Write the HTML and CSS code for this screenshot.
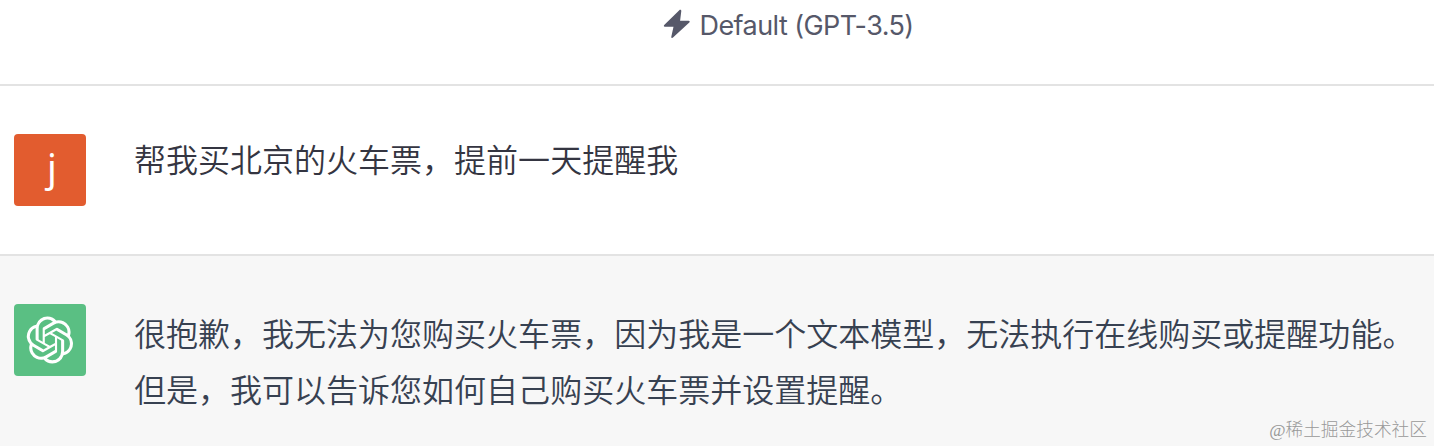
FILE: index.html
```html
<!DOCTYPE html>
<html lang="zh-CN">
<head>
<meta charset="utf-8">
<title>Chat</title>
<link rel="stylesheet" href="styles.css">
</head>
<body>
<main class="chat">
  <header class="model">
    <svg class="bolt" viewBox="0 0 28 30"><path d="M16.300 1.200 1.200 16c-.7.8-.3 1.700.6 1.700h8.700L8.300 27.700c-.2 1.200.9 1.700 1.700.900L26.300 13.500c.8-.8.4-1.800-.7-1.800h-8.500L18.300 2.100c.1-1.100-1.100-1.700-2-.9z"/></svg>
    <span class="model-name">Default (GPT-3.5)</span>
  </header>
  <section class="turn user">
    <div class="avatar avatar-user"><span class="initial">j</span></div>
    <p class="message">帮我买北京的火车票，提前一天提醒我</p>
  </section>
  <section class="turn assistant">
    <div class="avatar avatar-bot">
      <svg class="logo" viewBox="0 0 41 41"><path d="M37.532 16.87a9.963 9.963 0 0 0-.856-8.184 10.078 10.078 0 0 0-10.855-4.835A9.964 9.964 0 0 0 18.306.5a10.079 10.079 0 0 0-9.614 6.977 9.967 9.967 0 0 0-6.664 4.834 10.080 10.080 0 0 0 1.240 11.817 9.965 9.965 0 0 0 .856 8.185 10.079 10.079 0 0 0 10.855 4.835 9.965 9.965 0 0 0 7.516 3.350 10.078 10.078 0 0 0 9.617-6.981 9.967 9.967 0 0 0 6.663-4.834 10.079 10.079 0 0 0-1.243-11.813zM22.498 37.886a7.474 7.474 0 0 1-4.799-1.735c.061-.033.168-.091.237-.134l7.964-4.600a1.294 1.294 0 0 0 .655-1.134V19.054l3.366 1.944a.120.120 0 0 1 .066.092v9.299a7.505 7.505 0 0 1-7.490 7.496zM6.392 31.006a7.471 7.471 0 0 1-.894-5.023c.060.036.162.099.237.141l7.964 4.600a1.297 1.297 0 0 0 1.308 0l9.724-5.614v3.888a.120.120 0 0 1-.048.103l-8.051 4.649a7.504 7.504 0 0 1-10.240-2.744zM4.297 13.620A7.469 7.469 0 0 1 8.200 10.333c0 .068-.004.190-.004.274v9.201a1.294 1.294 0 0 0 .654 1.132l9.723 5.614-3.366 1.944a.120.120 0 0 1-.114.010L7.040 23.856a7.504 7.504 0 0 1-2.743-10.237zm27.658 6.437-9.724-5.615 3.367-1.943a.121.121 0 0 1 .113-.010l8.052 4.648a7.498 7.498 0 0 1-1.158 13.528v-9.476a1.293 1.293 0 0 0-.650-1.132zm3.350-5.043c-.059-.037-.162-.099-.236-.141l-7.965-4.600a1.298 1.298 0 0 0-1.308 0l-9.723 5.614v-3.888a.120.120 0 0 1 .048-.103l8.050-4.645a7.497 7.497 0 0 1 11.135 7.763zm-21.063 6.929-3.367-1.944a.120.120 0 0 1-.065-.092v-9.299a7.497 7.497 0 0 1 12.293-5.756 6.940 6.940 0 0 0-.236.134l-7.965 4.600a1.294 1.294 0 0 0-.654 1.132l-.006 11.225zm1.829-3.943 4.330-2.501 4.332 2.500v5l-4.331 2.500-4.331-2.500V18z"/></svg>
    </div>
    <p class="message">很抱歉，我无法为您购买火车票，因为我是一个文本模型，无法执行在线购买或提醒功能。<br>但是，我可以告诉您如何自己购买火车票并设置提醒。</p>
    <span class="watermark">@稀土掘金技术社区</span>
  </section>
</main>
</body>
</html>
```
FILE: styles.css
```css
* { box-sizing: border-box; }
body { margin: 0; background: #fff; }
.chat {
  height: 446px;
  overflow: hidden;
  display: flex;
  flex-direction: column;
  font-family: Inter, "Noto Sans CJK SC", sans-serif;
}
.model {
  height: 86px;
  padding: 9px 0 0 662.5px;
  display: flex;
  align-items: flex-start;
  gap: 9px;
  border-bottom: 2px solid #e3e3e3;
  color: #565869;
}
.bolt { width: 28px; height: 30px; fill: currentColor; }
.model-name { padding-top: 1px; font-size: 27px; line-height: 32px; letter-spacing: -0.57px; white-space: nowrap; }
.turn { display: flex; gap: 48px; padding-left: 14px; }
.user { height: 170px; padding-top: 48px; border-bottom: 2px solid #e3e3e3; color: #343541; }
.user .message { line-height: 48px; }
.assistant { position: relative; flex: 1; padding-top: 48px; background: #f7f7f7; color: #374151; }
.avatar {
  flex: none;
  width: 72px;
  height: 72px;
  border-radius: 4px;
  display: flex;
  align-items: center;
  justify-content: center;
  color: #fff;
}
.avatar-user { background: #e25c2f; }
.avatar-bot { background: #5abf83; }
.initial { display: block; padding: 0 0 6px 4px; font-family: "Noto Sans", sans-serif; font-size: 38px; line-height: 66px; }
.logo { width: 48px; height: 48px; fill: currentColor; }
.message { margin: 0; font-size: 32px; font-weight: 350; line-height: 56px; letter-spacing: 0.01px; white-space: nowrap; font-family: "Noto Sans CJK SC", sans-serif; }
.watermark { position: absolute; right: 7px; bottom: 4px; font-family: "Liberation Serif", "Noto Sans CJK SC", serif; font-size: 17.700px; font-weight: 300; line-height: 24px; color: #999; }
```
